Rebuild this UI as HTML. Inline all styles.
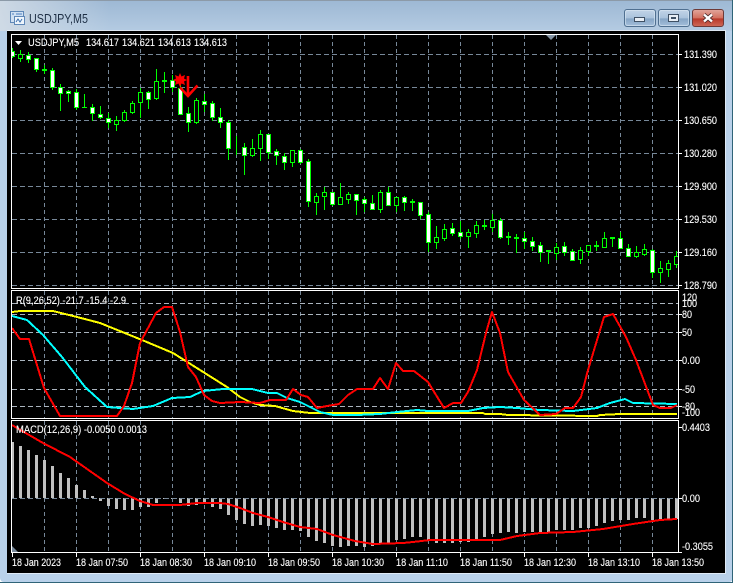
<!DOCTYPE html>
<html><head><meta charset="utf-8"><title>USDJPY,M5</title>
<style>
html,body{margin:0;padding:0;background:#fff;width:736px;height:583px;overflow:hidden}
svg{display:block;position:absolute;left:0;top:0}
text{font-family:"Liberation Sans",sans-serif;font-size:11px;fill:#fff;stroke:#fff;stroke-width:.12}
</style></head><body>
<svg width="736" height="583" viewBox="0 0 736 583" xmlns="http://www.w3.org/2000/svg">
<defs>
<linearGradient id="t" x1="0" y1="0" x2="0" y2="1"><stop offset="0" stop-color="#9db8d4"/><stop offset="1" stop-color="#b4cbe2"/></linearGradient>
<linearGradient id="l" x1="0" y1="0" x2="1" y2="0"><stop offset="0" stop-color="#d2dce6" stop-opacity=".9"/><stop offset="1" stop-color="#d2dce6" stop-opacity="0"/></linearGradient>
<linearGradient id="b" x1="0" y1="0" x2="0" y2="1"><stop offset="0" stop-color="#c3d5e8"/><stop offset=".5" stop-color="#a9c2dc"/><stop offset=".55" stop-color="#86a5c5"/><stop offset="1" stop-color="#a5c0dc"/></linearGradient>
<linearGradient id="c" x1="0" y1="0" x2="0" y2="1"><stop offset="0" stop-color="#e2a79d"/><stop offset=".5" stop-color="#d2705f"/><stop offset=".55" stop-color="#b8392a"/><stop offset="1" stop-color="#cf6a58"/></linearGradient>
<clipPath id="mc"><rect x="12" y="35" width="666" height="253"/></clipPath>
<clipPath id="rc"><rect x="12" y="291" width="666" height="127"/></clipPath>
<clipPath id="ac"><rect x="12" y="421" width="666" height="131"/></clipPath>
</defs>
<rect x="0" y="0" width="733" height="582" rx="4" fill="#b9d1ea"/>
<rect x="0" y="0" width="733" height="31" fill="url(#t)"/>
<rect x="0" y="0" width="110" height="31" fill="url(#l)"/>
<path d="M0 .5H733" stroke="#8c9aa8"/>
<path d="M732.5 0V582M0 582.5H733" stroke="#2f6478"/>
<rect x="7" y="30" width="719" height="544" fill="#fff" fill-opacity=".55"/>
<rect x="7" y="31" width="718" height="542" fill="#000"/>

<!-- title icon -->
<rect x="10.5" y="11.5" width="13" height="11" fill="#cfe0f2" stroke="#5f88b8"/>
<rect x="14.5" y="16.5" width="10" height="8" fill="#eef5fc" stroke="#5f88b8"/>
<path d="M12 14h2M16 14h6" stroke="#4d7fc0"/>
<path d="M16 22l2-3 2 3 2-3" fill="none" stroke="#3a70b0"/>
<text x="29" y="23" style="font-size:13px;fill:#1e2f45;stroke:none" textLength="59" lengthAdjust="spacingAndGlyphs">USDJPY,M5</text>

<!-- window buttons -->
<rect x="624.5" y="9.5" width="31" height="17" rx="2.5" fill="url(#b)" stroke="#4f6f90"/>
<rect x="625.5" y="10.5" width="29" height="15" rx="2" fill="none" stroke="#dbe7f3" stroke-opacity=".6"/>
<rect x="634.5" y="17.5" width="10" height="4" fill="#e8eef5" stroke="#3f5064"/>
<rect x="658.5" y="9.5" width="31" height="17" rx="2.5" fill="url(#b)" stroke="#4f6f90"/>
<rect x="659.5" y="10.5" width="29" height="15" rx="2" fill="none" stroke="#dbe7f3" stroke-opacity=".6"/>
<rect x="668.5" y="14.5" width="10" height="7" fill="#e8eef5" stroke="#3f5064"/>
<rect x="671" y="17" width="5" height="2" fill="#3f5064"/>
<rect x="692.5" y="9.5" width="31" height="17" rx="2.5" fill="url(#c)" stroke="#6e3a38"/>
<path d="M704 14.5l8 7M712 14.5l-8 7" stroke="#4a2a2a" stroke-width="4"/>
<path d="M704 14.5l8 7M712 14.5l-8 7" stroke="#fff" stroke-width="2.4"/>

<!-- grids -->
<g fill="none" stroke="#778899" shape-rendering="crispEdges">
<path stroke-dasharray="4 3" d="M44.5 35V288M76.5 35V288M108.5 35V288M140.5 35V288M172.5 35V288M204.5 35V288M236.5 35V288M268.5 35V288M300.5 35V288M332.5 35V288M364.5 35V288M396.5 35V288M428.5 35V288M460.5 35V288M492.5 35V288M524.5 35V288M556.5 35V288M588.5 35V288M620.5 35V288M652.5 35V288"/>
<path stroke-dasharray="5 3" d="M12 54.5H678M12 87.5H678M12 120.5H678M12 153.5H678M12 186.5H678M12 219.5H678M12 252.5H678M12 285.5H678"/>
<path stroke-dasharray="4 3" d="M44.5 291V418M76.5 291V418M108.5 291V418M140.5 291V418M172.5 291V418M204.5 291V418M236.5 291V418M268.5 291V418M300.5 291V418M332.5 291V418M364.5 291V418M396.5 291V418M428.5 291V418M460.5 291V418M492.5 291V418M524.5 291V418M556.5 291V418M588.5 291V418M620.5 291V418M652.5 291V418"/>
<path stroke="#aab4be" stroke-dasharray="5 3" d="M12 303.5H678M12 314.5H678M12 332.5H678M12 360.5H678M12 389.5H678M12 406.5H678"/>
<path stroke-dasharray="4 3" d="M44.5 421V552M76.5 421V552M108.5 421V552M140.5 421V552M172.5 421V552M204.5 421V552M236.5 421V552M268.5 421V552M300.5 421V552M332.5 421V552M364.5 421V552M396.5 421V552M428.5 421V552M460.5 421V552M492.5 421V552M524.5 421V552M556.5 421V552M588.5 421V552M620.5 421V552M652.5 421V552"/>
</g>

<!-- candles -->
<g clip-path="url(#mc)" shape-rendering="crispEdges">
<path fill="none" stroke="#0f0" d="M12.5 48V58M20.5 50V62M28.5 52V63M36.5 58V72M44.5 65V74M52.5 68V90M60.5 84V111M68.5 90V102M76.5 89V110M84.5 94V108M92.5 104V121M100.5 106V119M108.5 113V128M116.5 116V131M124.5 110V122M132.5 101V114M140.5 88V118M148.5 91V109M156.5 69V100M164.5 72V93M172.5 75V92M180.5 85V115M188.5 107V132M196.5 98V124M204.5 94V112M212.5 101V121M220.5 108V128M228.5 120V160M236.5 136V155M244.5 143V175M252.5 139V157M260.5 130V161M268.5 134V159M276.5 149V165M284.5 153V170M292.5 150V167M300.5 149V164M308.5 159V207M316.5 193V215M324.5 187V210M332.5 192V206M340.5 183V205M348.5 192V204M356.5 194V215M364.5 197V212M372.5 195V210M380.5 190V213M388.5 187V206M396.5 197V212M404.5 196V211M412.5 199V211M420.5 202V219M428.5 212V252M436.5 226V249M444.5 224V241M452.5 223V236M460.5 221V239M468.5 229V248M476.5 221V238M484.5 220V230M492.5 214V232M500.5 218V239M508.5 232V245M516.5 234V253M524.5 232V249M532.5 237V251M540.5 242V262M548.5 250V264M556.5 243V260M564.5 242V256M572.5 249V261M580.5 247V264M588.5 245V256M596.5 241V251M604.5 232V248M612.5 237V247M620.5 232V249M628.5 244V257M636.5 246V258M644.5 244V256M652.5 249V278M660.5 261V283M668.5 260V277M676.5 251V268"/>
<!-- dojis -->
<path fill="#0f0" d="M42 69h5v2h-5zM82 107h5v1h-5zM162 80h5v2h-5zM410 201h5v2h-5zM482 225h5v2h-5zM506 236h5v2h-5zM514 237h5v2h-5zM546 250h5v2h-5zM594 245h5v2h-5zM610 237h5v2h-5z"/>
<!-- bullish: hollow -->
<path fill="#000" stroke="#0f0" d="M18.500 54.500h4v4h-4zM114.500 120.500h4v4h-4zM122.500 112.500h4v8h-4zM130.500 103.500h4v9h-4zM138.500 92.500h4v10h-4zM154.500 81.500h4v17h-4zM194.500 100.500h4v22h-4zM250.500 148.500h4v7h-4zM258.500 134.500h4v14h-4zM290.500 150.500h4v12h-4zM314.500 196.500h4v6h-4zM322.500 192.500h4v4h-4zM338.500 197.500h4v7h-4zM346.500 194.500h4v5h-4zM378.500 192.500h4v17h-4zM394.500 197.500h4v8h-4zM434.500 237.500h4v5h-4zM442.500 229.500h4v9h-4zM466.500 232.500h4v4h-4zM474.500 225.500h4v8h-4zM490.500 220.500h4v7h-4zM554.500 247.500h4v6h-4zM578.500 250.500h4v9h-4zM586.500 245.500h4v6h-4zM602.500 238.500h4v9h-4zM634.500 252.500h4v4h-4zM642.500 249.500h4v5h-4zM658.500 268.500h4v4h-4zM666.500 263.500h4v6h-4zM674.500 256.500h4v8h-4z"/>
<!-- bearish: white -->
<path fill="#fff" stroke="#0f0" d="M10.500 51.500h4v5h-4zM26.500 55.500h4v4h-4zM34.500 58.500h4v11h-4zM50.500 70.500h4v17h-4zM58.500 87.500h4v6h-4zM66.500 91.500h4v2h-4zM74.500 92.500h4v15h-4zM90.500 107.500h4v6h-4zM98.500 114.500h4v3h-4zM106.500 118.500h4v4h-4zM146.500 92.500h4v7h-4zM170.500 80.500h4v7h-4zM178.500 88.500h4v26h-4zM186.500 113.500h4v9h-4zM202.500 101.500h4v3h-4zM210.500 103.500h4v14h-4zM218.500 117.500h4v5h-4zM226.500 122.500h4v26h-4zM242.500 147.500h4v8h-4zM266.500 134.500h4v18h-4zM274.500 151.500h4v4h-4zM282.500 156.500h4v6h-4zM298.500 150.500h4v12h-4zM306.500 161.500h4v40h-4zM330.500 192.500h4v12h-4zM354.500 194.500h4v6h-4zM362.500 199.500h4v4h-4zM370.500 203.500h4v6h-4zM386.500 192.500h4v13h-4zM402.500 197.500h4v5h-4zM418.500 202.500h4v13h-4zM426.500 214.500h4v28h-4zM450.500 228.500h4v5h-4zM458.500 232.500h4v4h-4zM498.500 220.500h4v17h-4zM522.500 238.500h4v3h-4zM530.500 241.500h4v5h-4zM538.500 245.500h4v7h-4zM562.500 246.500h4v6h-4zM570.500 251.500h4v9h-4zM618.500 238.500h4v10h-4zM626.500 248.500h4v8h-4zM650.500 250.500h4v22h-4z"/>
</g>

<!-- signal marks -->
<polygon fill="#f00" points="180,73 181.500,76.500 185,75 184,78.500 187,80 184,81.500 185,85 181.500,83.500 180,87 178.500,83.500 175,85 176,81.500 173,80 176,78.500 175,75 178.500,76.500"/>
<path d="M188 76V96M180 87.500L188 96L197.500 85.500" fill="none" stroke="#f00" stroke-width="2.6"/>

<!-- RVI -->
<g clip-path="url(#rc)" fill="none" stroke-width="2" stroke-linejoin="round" shape-rendering="crispEdges">
<polyline stroke="#ff0" points="12,312 20,311 53,311 77,317 100,323 142,340 173,353 200,370 227,387 240,397 250,402 260,405 275,406 293,411 310,413 483,413 485,414 500,414 508,415 597,416 600,415 620,414 677,414"/>
<polyline stroke="#0ff" points="12,316 27,320 43,335 62,357 85,387 107,407 133,409 153,406 172,398 190,397 203,391 223,389 252,389 268,393 277,393 287,398 300,402 320,412 333,415 357,415 380,414 397,412 417,410 428,411 468,411 483,408 500,407 517,408 540,410 573,411 597,408 610,403 625,399 633,403 677,404"/>
<polyline stroke="#f00" points="12,328 20,339 29,339 44,388 60,416 117,416 124,406 132,383 140,343 148,328 156,313 164,307 172,307 180,332 188,367 196,377 204,395 212,401 220,403 240,402 260,403 270,400 286,400 293,389 301,395 308,397 317,408 327,406 339,404 348,395 357,389 373,389 380,378 388,389 396,363 403,371 414,371 428,382 444,408 453,403 461,403 468,392 477,370 486,333 492,312 500,333 508,372 524,400 540,415 556,414 565,408 573,408 581,397 588,370 604,317 613,314 626,337 636,360 653,405 660,408 671,408 677,405"/>
</g>

<!-- MACD -->
<g clip-path="url(#ac)">
<path fill="none" stroke="#c0c0c0" stroke-width="3" shape-rendering="crispEdges" d="M12.5 442V498M20.5 446V498M28.5 450V498M36.500 455V498M44.500 460V498M52.500 466V498M60.500 473V498M68.500 478V498M76.500 485V498M84.500 490V498M92.500 496V498M100.500 498V501M108.500 498V506M116.500 498V509M124.500 498V510M132.500 498V510M140.500 498V507M148.500 498V507M156.500 498V503M164.500 498V499M172.500 498V499M180.500 498V503M188.500 498V506M196.500 498V505M204.500 498V504M212.500 498V507M220.500 498V509M228.500 498V515M236.500 498V520M244.500 498V524M252.500 498V526M260.500 498V525M268.500 498V526M276.500 498V528M284.500 498V530M292.500 498V530M300.500 498V531M308.500 498V537M316.500 498V541M324.500 498V543M332.500 498V546M340.500 498V547M348.500 498V546M356.500 498V546M364.500 498V547M372.500 498V546M380.500 498V543M388.500 498V543M396.500 498V540M404.500 498V539M412.500 498V537M420.500 498V537M428.500 498V540M436.500 498V543M444.500 498V543M452.500 498V543M460.500 498V542M468.500 498V542M476.500 498V540M484.500 498V537M492.500 498V534M500.500 498V533M508.500 498V532M516.500 498V533M524.500 498V532M532.500 498V532M540.500 498V533M548.500 498V532M556.500 498V530M564.500 498V530M572.500 498V530M580.500 498V528M588.500 498V528M596.500 498V526M604.500 498V523M612.500 498V521M620.500 498V520M628.500 498V520M636.500 498V518M644.500 498V518M652.500 498V520M660.500 498V519M668.500 498V519M676.500 498V519"/>
<path d="M12 498.500H678" stroke="#778899" stroke-dasharray="5 3" shape-rendering="crispEdges"/>
<polyline fill="none" stroke="#f00" stroke-width="2" shape-rendering="crispEdges" points="12,425 17,428 43,443 70,457 107,483 125,494 140,501 153,505 180,505 197,503 220,503 228,504 240,508 253,513 268,517 283,522 300,527 317,529 333,535 355,541 373,544 403,543 413,542 430,540 500,540 517,536 540,533 573,532 603,529 633,524 660,520 677,519"/>
</g>

<!-- frames -->
<g fill="none" stroke="#fff" shape-rendering="crispEdges">
<rect x="11.500" y="34.500" width="667" height="254"/>
<rect x="11.500" y="290.500" width="667" height="128"/>
<rect x="11.500" y="420.500" width="667" height="132"/>
<path d="M679 54.500h3M679 87.500h3M679 120.500h3M679 153.500h3M679 186.500h3M679 219.500h3M679 252.500h3M679 285.500h3M679 314.500h3M679 332.500h3M679 360.500h3M679 389.500h3M679 406.500h3M679 498.500h3M679 552.500h3M679 427.500h3"/>
<path d="M12.500 553v4M76.500 553v4M140.500 553v4M204.500 553v4M268.500 553v4M332.500 553v4M396.500 553v4M460.500 553v4M524.500 553v4M588.500 553v4M652.500 553v4"/>
</g>
<polygon points="546,35 556,35 551,40" fill="#8494a4"/>
<polygon points="12,546 12,552 18,552" fill="#778899"/>
<polygon points="15,41 22,41 18.500,45" fill="#fff"/>

<!-- legends -->
<text x="28" y="46" textLength="51" lengthAdjust="spacingAndGlyphs">USDJPY,M5</text>
<text x="86" y="46" textLength="33" lengthAdjust="spacingAndGlyphs">134.617</text>
<text x="122" y="46" textLength="33" lengthAdjust="spacingAndGlyphs">134.621</text>
<text x="158" y="46" textLength="33" lengthAdjust="spacingAndGlyphs">134.613</text>
<text x="194" y="46" textLength="33" lengthAdjust="spacingAndGlyphs">134.613</text>
<text x="16" y="304" textLength="110" lengthAdjust="spacingAndGlyphs">R(9,26,52) -21.7 -15.4 -2.9</text>
<text x="16" y="433" textLength="131" lengthAdjust="spacingAndGlyphs">MACD(12,26,9) -0.0050 0.0013</text>

<!-- price scale -->
<g lengthAdjust="spacingAndGlyphs">
<text x="684" y="58" textLength="33" lengthAdjust="spacingAndGlyphs">131.390</text>
<text x="684" y="91" textLength="33" lengthAdjust="spacingAndGlyphs">131.020</text>
<text x="684" y="124" textLength="33" lengthAdjust="spacingAndGlyphs">130.650</text>
<text x="684" y="157" textLength="33" lengthAdjust="spacingAndGlyphs">130.280</text>
<text x="684" y="190" textLength="33" lengthAdjust="spacingAndGlyphs">129.900</text>
<text x="684" y="223" textLength="33" lengthAdjust="spacingAndGlyphs">129.530</text>
<text x="684" y="256" textLength="33" lengthAdjust="spacingAndGlyphs">129.160</text>
<text x="684" y="289" textLength="33" lengthAdjust="spacingAndGlyphs">128.790</text>
<text x="682" y="301" textLength="15" lengthAdjust="spacingAndGlyphs">120</text>
<text x="682" y="307" textLength="15" lengthAdjust="spacingAndGlyphs">100</text>
<text x="682" y="318" textLength="10" lengthAdjust="spacingAndGlyphs">80</text>
<text x="682" y="336" textLength="10" lengthAdjust="spacingAndGlyphs">50</text>
<text x="682" y="364" textLength="18" lengthAdjust="spacingAndGlyphs">0.00</text>
<text x="682" y="393" textLength="13" lengthAdjust="spacingAndGlyphs">-50</text>
<text x="682" y="410" textLength="13" lengthAdjust="spacingAndGlyphs">-80</text>
<text x="682" y="416" textLength="18" lengthAdjust="spacingAndGlyphs">-100</text>
<text x="682" y="431" textLength="28" lengthAdjust="spacingAndGlyphs">0.4403</text>
<text x="682" y="502" textLength="18" lengthAdjust="spacingAndGlyphs">0.00</text>
<text x="682" y="550" textLength="31" lengthAdjust="spacingAndGlyphs">-0.3055</text>
</g>

<!-- time scale -->
<g>
<text x="12" y="566" textLength="49" lengthAdjust="spacingAndGlyphs">18 Jan 2023</text>
<text x="76" y="566" textLength="52" lengthAdjust="spacingAndGlyphs">18 Jan 07:50</text>
<text x="140" y="566" textLength="52" lengthAdjust="spacingAndGlyphs">18 Jan 08:30</text>
<text x="204" y="566" textLength="52" lengthAdjust="spacingAndGlyphs">18 Jan 09:10</text>
<text x="268" y="566" textLength="52" lengthAdjust="spacingAndGlyphs">18 Jan 09:50</text>
<text x="332" y="566" textLength="52" lengthAdjust="spacingAndGlyphs">18 Jan 10:30</text>
<text x="396" y="566" textLength="52" lengthAdjust="spacingAndGlyphs">18 Jan 11:10</text>
<text x="460" y="566" textLength="52" lengthAdjust="spacingAndGlyphs">18 Jan 11:50</text>
<text x="524" y="566" textLength="52" lengthAdjust="spacingAndGlyphs">18 Jan 12:30</text>
<text x="588" y="566" textLength="52" lengthAdjust="spacingAndGlyphs">18 Jan 13:10</text>
<text x="652" y="566" textLength="52" lengthAdjust="spacingAndGlyphs">18 Jan 13:50</text>
</g>
</svg>
</body></html>
